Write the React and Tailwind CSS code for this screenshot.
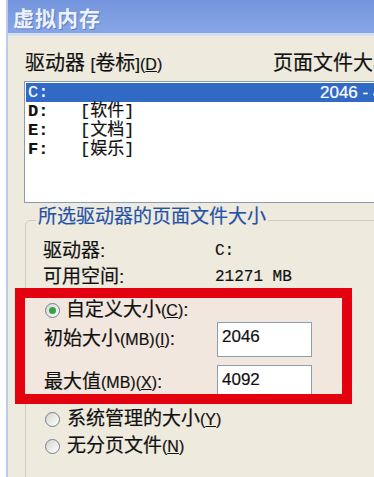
const CJK = "font-['Liberation_Sans','Noto_Sans_CJK_SC',sans-serif]";
const MONO = "font-['Liberation_Mono','Noto_Sans_CJK_SC',monospace]";

function Radio({ checked }) {
  return (
    <span className="w-[15px] h-[15px] rounded-full border border-[#6f8093] bg-gradient-to-br from-[#d6d6cc] to-[#ffffff] flex items-center justify-center shrink-0">
      {checked && <span className="w-[7px] h-[7px] rounded-full bg-[#3a9f47]" />}
    </span>
  );
}

function Acc({ children, k }) {
  return (
    <span className="text-[16px]">
      {children}(<u>{k}</u>)
    </span>
  );
}

function Field({ value }) {
  return (
    <div className="w-[95px] h-[35px] shrink-0 border border-[#8e9db0] bg-white pl-[4px] pt-[4px] text-[17px] leading-[20px] text-[#111] font-['Liberation_Sans',sans-serif]">
      {value}
    </div>
  );
}

export default function App() {
  return (
    <div className="w-[374px] h-[477px] overflow-hidden bg-white flex">
      <div className="w-[6px] shrink-0 bg-white" />
      <div className="flex-1 min-w-0 flex flex-col border-l-2 border-[#bccbea]">
        <div className="h-[33px] shrink-0 bg-gradient-to-b from-[#7395dd] to-[#88a6e6] flex items-center pl-[5px] text-[21px] leading-[26px] font-bold tracking-[1px] text-[#eef2fc] [text-shadow:1px_1px_0_#5a7cc6] font-['Noto_Sans_CJK_SC',sans-serif]">
          虚拟内存
        </div>
        <div className="h-[3px] shrink-0 bg-[#d6dff0]" />
        <div className={`flex-1 min-h-0 overflow-hidden bg-[#eeeadd] pt-[14px] pl-[16px] text-[#111] [-webkit-text-stroke:0.2px_currentColor] ${CJK}`}>
          {/* header */}
          <div className="flex whitespace-nowrap pl-[1px] h-[26px] text-[20px] leading-[26px]">
            <span className="w-[248px] shrink-0">
              驱动器 <span className="text-[17px]">[</span>卷标<span className="text-[17px]">]</span>
              <Acc k="D" />
            </span>
            <span>页面文件大小</span>
          </div>
          {/* list */}
          <div className={`mt-[5px] w-[400px] h-[122px] border border-[#8a9bb1] bg-white p-[1px] text-[17px] leading-[19px] ${MONO}`}>
            <div className="h-[19px] bg-[#316ac5] text-white flex whitespace-nowrap pl-[2px]">
              <span className="w-[292px] shrink-0">C:</span>
              <span className="font-['Liberation_Sans',sans-serif]">2046 - 4092</span>
            </div>
            <div className="h-[19px] flex whitespace-nowrap pl-[2px] font-bold">
              <span className="w-[52px] shrink-0">D:</span>
              <span className="font-normal">[软件]</span>
            </div>
            <div className="h-[19px] flex whitespace-nowrap pl-[2px] font-bold">
              <span className="w-[52px] shrink-0">E:</span>
              <span className="font-normal">[文档]</span>
            </div>
            <div className="h-[19px] flex whitespace-nowrap pl-[2px] font-bold">
              <span className="w-[52px] shrink-0">F:</span>
              <span className="font-normal">[娱乐]</span>
            </div>
          </div>
          {/* group box */}
          <fieldset className="mt-[3px] ml-[1px] w-[400px] h-[300px] border border-[#cfcdbd] rounded-[5px]">
            <legend className="ml-[10px] px-[2px] pb-[6px] text-[19px] leading-[22px] text-[#2452a8] whitespace-nowrap">
              所选驱动器的页面文件大小
            </legend>
            <div className="pt-[4px] pl-[17px] text-[19px] leading-[26px]">
              <div className="h-[26px] flex whitespace-nowrap">
                <span className="w-[172px] shrink-0">驱动器:</span>
                <span className={`text-[16px] ${MONO}`}>C:</span>
              </div>
              <div className="h-[26px] flex whitespace-nowrap">
                <span className="w-[172px] shrink-0">可用空间:</span>
                <span className={`text-[16px] ${MONO}`}>21271 MB</span>
              </div>
            </div>
            {/* red annotation frame */}
            <div className="mt-[-2px] ml-[-11px] w-[337px] h-[116px] border-[10px] border-[#e3000f]">
              <div className="h-full overflow-hidden bg-[#f1e7df] text-[19px] leading-[22px]">
                <div className="h-[24px] flex items-center gap-[6px] pl-[20px] whitespace-nowrap">
                  <Radio checked />
                  <span>
                    自定义大小<Acc k="C" />:
                  </span>
                </div>
                <div className="h-[35px] flex items-center whitespace-nowrap pl-[19px]">
                  <span className="w-[173px] shrink-0">
                    初始大小<span className="text-[16px]">(MB)</span>
                    <Acc k="I" />:
                  </span>
                  <Field value="2046" />
                </div>
                <div className="mt-[8px] h-[35px] flex items-center whitespace-nowrap pl-[19px]">
                  <span className="w-[173px] shrink-0">
                    最大值<span className="text-[16px]">(MB)</span>
                    <Acc k="X" />:
                  </span>
                  <Field value="4092" />
                </div>
              </div>
            </div>
            <div className="mt-[2px] pl-[19px] text-[19px] leading-[22px]">
              <div className="h-[27px] flex items-center gap-[7px] whitespace-nowrap">
                <Radio />
                <span>
                  系统管理的大小<Acc k="Y" />
                </span>
              </div>
              <div className="h-[27px] flex items-center gap-[7px] whitespace-nowrap">
                <Radio />
                <span>
                  无分页文件<Acc k="N" />
                </span>
              </div>
            </div>
          </fieldset>
        </div>
      </div>
    </div>
  );
}
